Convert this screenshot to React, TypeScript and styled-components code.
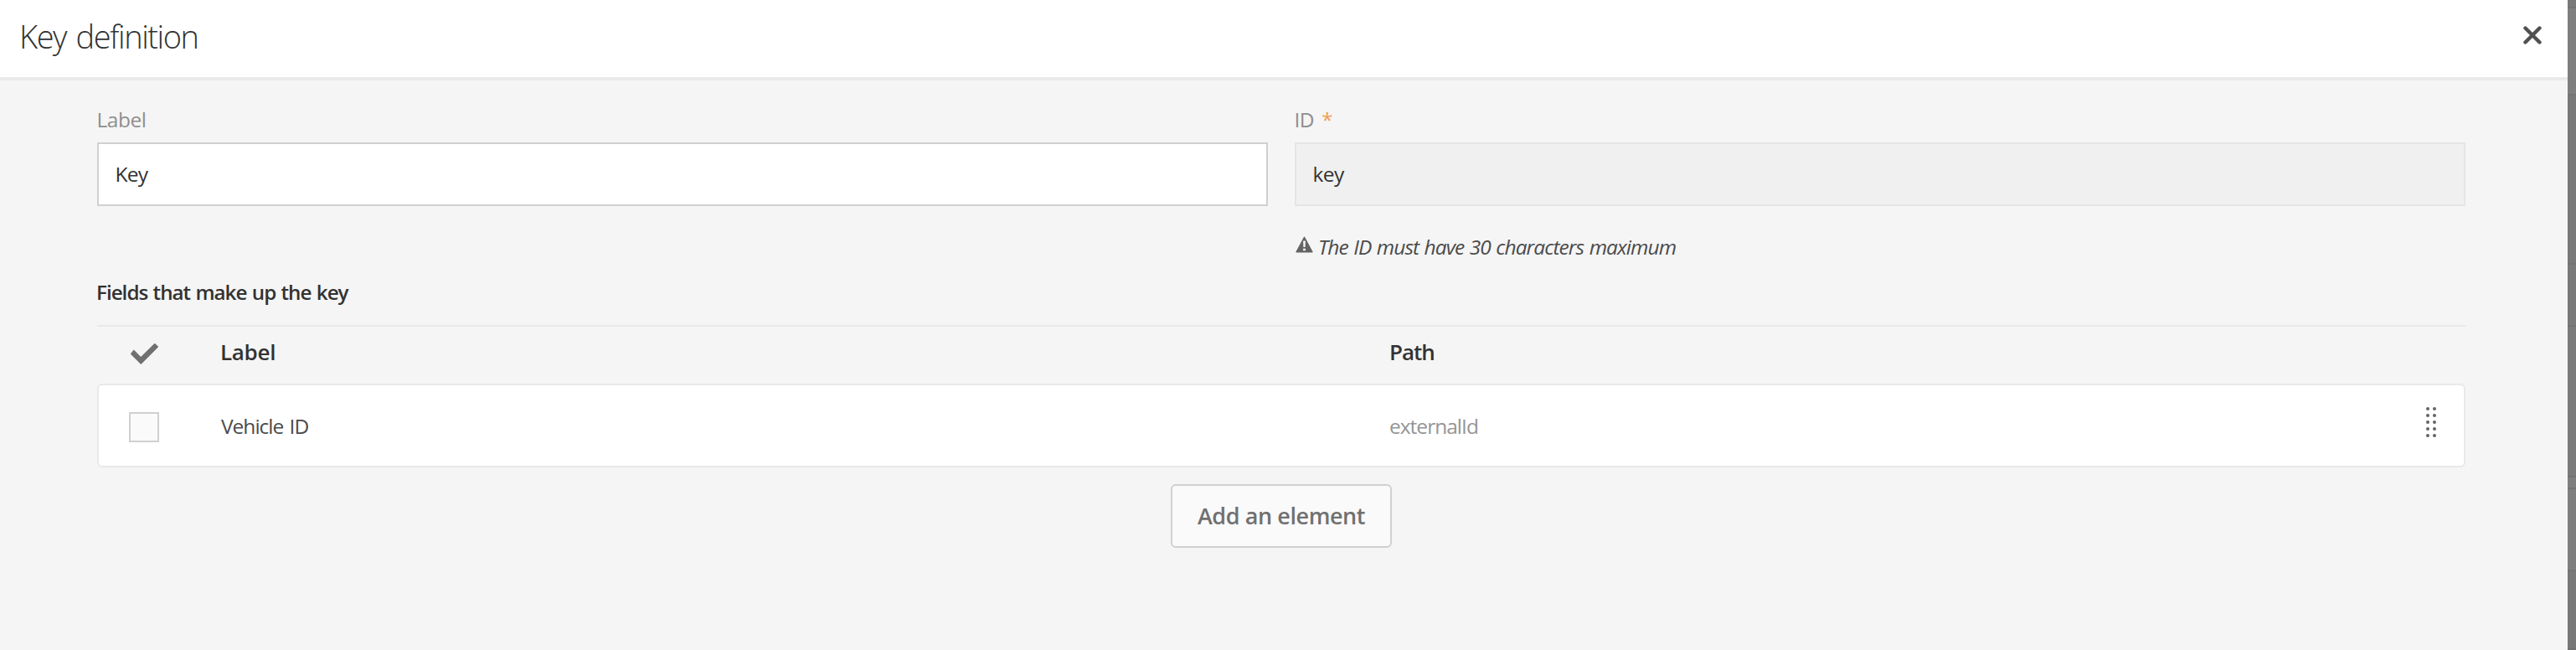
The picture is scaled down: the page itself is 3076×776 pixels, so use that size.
import React from 'react';
import styled, { createGlobalStyle } from 'styled-components';

const GlobalStyle = createGlobalStyle`
  *, *::before, *::after { box-sizing: border-box; }
  body { margin: 0; font-family: "Open Sans", "Noto Sans", sans-serif; overflow: hidden; }
`;

const Backdrop = styled.div`
  display: flex;
  width: 100%;
  height: 776px;
  background: linear-gradient(
    to bottom,
    #797979 0 8px, #737373 8px 10px,
    #7f7f7f 10px 112px, #757575 112px 114px,
    #797979 114px 314px, #737373 314px 316px,
    #797979 316px 388px, #727272 388px 390px,
    #7a7a7a 390px 568px, #727272 568px 570px,
    #7f7f7f 570px 582px, #757575 582px 584px,
    #7f7f7f 584px 680px, #757575 680px 682px,
    #787878 682px 774px, #717171 774px 776px
  );
`;

const Dialog = styled.section`
  display: flex;
  flex-direction: column;
  flex: 1;
  margin-right: 10px;
  background: #f5f5f5;
`;

const Header = styled.header`
  display: flex;
  justify-content: space-between;
  height: 96px;
  padding: 13px 31px 0 23px;
  background: #fff;
  border-bottom: 4px solid #eaeaea;
`;

const Title = styled.h1`
  margin: 0;
  font-size: 38px;
  font-weight: 300;
  line-height: 61px;
  letter-spacing: -1.45px;
  word-spacing: 3px;
  color: #323232;
`;

const CloseButton = styled.button`
  display: flex;
  width: 22px;
  height: 22px;
  margin-top: 18px;
  padding: 0;
  border: 0;
  background: none;
`;

const Content = styled.main`
  display: flex;
  flex-direction: column;
  padding: 31px 122px 0 116px;
`;

const FieldRow = styled.div`
  display: grid;
  grid-template-columns: 1fr 1fr;
  gap: 32px;
  height: 204px;
`;

const Field = styled.div`
  display: flex;
  flex-direction: column;
`;

const FieldLabel = styled.label`
  height: 43px;
  margin-left: -0.5px;
  font-size: 24.5px;
  line-height: 31px;
  letter-spacing: -0.5px;
  color: #8e8e8e;
`;

const Required = styled.span`
  margin-left: 9px;
  font-size: 24px;
  line-height: 1;
  color: #f29c52;
`;

const Input = styled.input<{ $tracking: number }>`
  width: 100%;
  height: 76px;
  padding: 0 20px 2px 19.5px;
  border: 2px solid #d0d0d0;
  border-radius: 0;
  background: #fff;
  font: 400 24.5px "Open Sans", "Noto Sans", sans-serif;
  letter-spacing: ${(p) => p.$tracking}px;
  color: #323232;
  outline: none;

  &:read-only {
    border-color: #e5e5e5;
    background: #f0f0f0;
  }
`;

const Hint = styled.p`
  display: flex;
  align-items: flex-start;
  gap: 6px;
  margin: 34px 0 0 1px;
  font-size: 24.5px;
  font-style: italic;
  line-height: 30px;
  letter-spacing: -0.93px;
  word-spacing: 1px;
  color: #4b4b4b;

  svg { margin-top: 2px; }
`;

const SectionTitle = styled.h2`
  height: 57px;
  margin: 0 0 0 -1px;
  font-size: 24.2px;
  font-weight: 600;
  line-height: 35px;
  letter-spacing: -0.98px;
  word-spacing: 1px;
  color: #323232;
`;

const TableHead = styled.div`
  display: grid;
  grid-template-columns: 147px 1396px 1fr;
  height: 70px;
  border-top: 2px solid #e9e9e9;
`;

const HeadCell = styled.div<{ $tracking: number }>`
  padding-top: 12px;
  font-size: 26px;
  font-weight: 600;
  line-height: 36px;
  letter-spacing: ${(p) => p.$tracking}px;
  color: #323232;
`;

const HeadCheck = styled.div`
  padding: 20px 0 0 40px;
  line-height: 0;
`;

const TableRow = styled.div`
  display: grid;
  grid-template-columns: 146px 1396px 1fr 50px;
  height: 100px;
  border: 2px solid #e9e9e9;
  border-radius: 6px;
  background: #fff;
`;

const Checkbox = styled.div`
  width: 36px;
  height: 36px;
  margin: 32px 0 0 36px;
  border: 2px solid #d0d0d0;
  background: #fafafa;
`;

const Cell = styled.div<{ $muted?: boolean }>`
  padding: 33px 0 0;
  margin-left: ${(p) => (p.$muted ? -1 : 0)}px;
  font-size: 24.5px;
  line-height: 32px;
  letter-spacing: ${(p) => (p.$muted ? -0.98 : -1)}px;
  word-spacing: 2px;
  color: ${(p) => (p.$muted ? '#959595' : '#4b4b4b')};
`;

const DragHandle = styled.div`
  padding: 26px 0 0 5px;
  line-height: 0;
`;

const AddButton = styled.button`
  align-self: center;
  width: 264px;
  height: 76px;
  margin-top: 20px;
  padding: 0 0 2px;
  border: 2px solid #d0d0d0;
  border-radius: 6px;
  background: #fafafa;
  font: 600 27px "Open Sans", "Noto Sans", sans-serif;
  letter-spacing: -0.42px;
  color: #707070;
`;

const CloseIcon = () => (
  <svg width="22" height="22" viewBox="0 0 22 22">
    <path d="M2.5 2.5 19.5 19.5M19.5 2.5 2.5 19.5" stroke="#505050" strokeWidth="4.4" strokeLinecap="round" />
  </svg>
);

const AlertIcon = () => (
  <svg width="21" height="20" viewBox="0 0 21 20">
    <path d="M10.5 0.8 20.3 19H.7Z" fill="#646464" stroke="#646464" strokeWidth="1" strokeLinejoin="round" />
    <path d="M9.1 5.4h2.8l-.3 7.6H9.4ZM9.1 14.8h2.8v2.4H9.1Z" fill="#f5f5f5" />
  </svg>
);

const CheckIcon = () => (
  <svg width="34" height="26" viewBox="0 0 34 26">
    <path d="M4 7.8 12.2 15.9 28.2.3a.8.8 0 0 1 1.1 0L32.8 3.4a.8.8 0 0 1 0 1.1L12.9 24.5a.8.8 0 0 1-1.1 0L.2 13a.8.8 0 0 1 0-1.1L3.3 7.9a.5.5 0 0 1 .7-.1Z" fill="#707070" />
  </svg>
);

const GripIcon = () => (
  <svg width="12" height="36" viewBox="0 0 12 36">
    {[2, 10, 18, 26, 34].map((y) => (
      <g key={y} fill="#646464">
        <circle cx="2" cy={y} r="2" />
        <circle cx="10" cy={y} r="2" />
      </g>
    ))}
  </svg>
);

export default function App() {
  return (
    <>
      <GlobalStyle />
      <Backdrop>
        <Dialog>
          <Header>
            <Title>Key definition</Title>
            <CloseButton aria-label="Close">
              <CloseIcon />
            </CloseButton>
          </Header>
          <Content>
            <FieldRow>
              <Field>
                <FieldLabel htmlFor="label">Label</FieldLabel>
                <Input id="label" defaultValue="Key" $tracking={-0.8} />
              </Field>
              <Field>
                <FieldLabel htmlFor="key-id">
                  ID<Required>*</Required>
                </FieldLabel>
                <Input id="key-id" defaultValue="key" readOnly $tracking={-0.6} />
                <Hint>
                  <AlertIcon />
                  The ID must have 30 characters maximum
                </Hint>
              </Field>
            </FieldRow>
            <SectionTitle>Fields that make up the key</SectionTitle>
            <TableHead>
              <HeadCheck>
                <CheckIcon />
              </HeadCheck>
              <HeadCell $tracking={-0.3}>Label</HeadCell>
              <HeadCell $tracking={-1}>Path</HeadCell>
            </TableHead>
            <TableRow>
              <Checkbox role="checkbox" aria-checked="false" />
              <Cell>Vehicle ID</Cell>
              <Cell $muted>externalId</Cell>
              <DragHandle>
                <GripIcon />
              </DragHandle>
            </TableRow>
            <AddButton>Add an element</AddButton>
          </Content>
        </Dialog>
      </Backdrop>
    </>
  );
}
